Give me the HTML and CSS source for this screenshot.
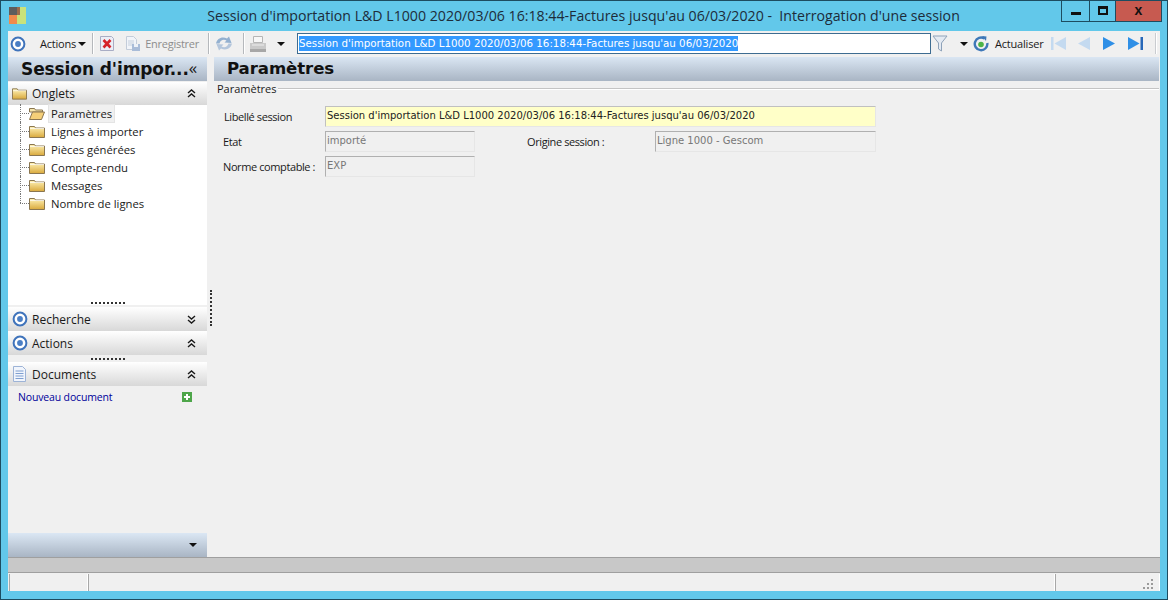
FILE: index.html
```html
<!DOCTYPE html>
<html lang="fr">
<head>
<meta charset="utf-8">
<title>Session d'importation</title>
<link rel="stylesheet" href="styles.css">
</head>
<body>
<svg class="defs" width="0" height="0">
  <defs>
    <linearGradient id="fold" x1="0" y1="0" x2="0" y2="1"><stop offset="0" stop-color="#fff3b8"/><stop offset="1" stop-color="#d9a93c"/></linearGradient>
    <symbol id="folder" viewBox="0 0 16 13"><path d="M.5 1.500h5l1 1.500h9v9.500H.5z" fill="url(#fold)" stroke="#8a7650"/><path d="M1 3.500h14" stroke="#fff" stroke-opacity=".7"/></symbol>
    <symbol id="target" viewBox="0 0 16 16"><circle cx="8" cy="8" r="6.400" fill="#fff" stroke="#3f73bb" stroke-width="2"/><circle cx="8" cy="8" r="2.900" fill="#4a7ec4"/></symbol>
    <symbol id="dup" viewBox="0 0 9 9"><path d="M1 4l3.500-3L8 4M1 8l3.500-3L8 8" fill="none" stroke="#1a1a1a" stroke-width="1.400"/></symbol>
    <symbol id="ddown" viewBox="0 0 9 9"><path d="M1 1l3.500 3L8 1M1 5l3.500 3L8 5" fill="none" stroke="#1a1a1a" stroke-width="1.400"/></symbol>
  </defs>
</svg>
<div class="window">
  <header class="titlebar">
    <svg class="appicon" width="17" height="17" viewBox="0 0 17 17"><rect width="8" height="8" fill="#5d5d5d"/><rect y="8" width="8" height="9" fill="#f08a4b"/><rect x="8" width="9" height="17" fill="#c9e27a"/><rect x="8" width="3" height="8" fill="#9a6b4c"/></svg>
    <div class="title">Session d'importation L&amp;D L1000 2020/03/06 16:18:44-Factures jusqu'au 06/03/2020 -&nbsp; Interrogation d'une session</div>
    <div class="winbtns">
      <div class="winbtn min"><span class="glyph-min"></span></div>
      <div class="winbtn max"><span class="glyph-max"></span></div>
      <div class="winbtn close">x</div>
    </div>
  </header>

  <div class="client">
    <div class="toolbar">
      <svg class="t-target" width="16" height="16"><use href="#target"/></svg>
      <span class="t-actions">Actions</span><span class="caret c-actions"></span>
      <span class="sep s1"></span>
      <svg class="t-del" width="14" height="15" viewBox="0 0 14 15"><path d="M.5.500h11l2 2v12H.5z" fill="#eceef6" stroke="#a9adc4"/><path d="M3.500 4l7 7.500M10.500 4l-7 7.500" stroke="#d6232a" stroke-width="2.600"/></svg>
      <svg class="t-save" width="16" height="17" viewBox="0 0 16 17"><path d="M1.500 1.500h7l3 3v10h-10z" fill="#f1f4f9" stroke="#c3ccd9"/><path d="M3 6h6M3 8h6M3 10h5" stroke="#c6d0dd"/><rect x="7" y="9" width="8" height="7" fill="#a9bcd8"/><rect x="9" y="9" width="4" height="3" fill="#eef2f8"/></svg>
      <span class="t-save-label">Enregistrer</span>
      <span class="sep s2"></span>
      <svg class="t-sync" width="16" height="17" viewBox="0 0 16 17"><path d="M0 8.500C1 3.500 6 1 11 3.500L13 1.500l2.500 6.500-7-.5 2-2C7.500 4 4.500 5 3.500 8.500z" fill="#93b0d0"/><path d="M16 8.500c-1 5-6 7.500-11 5L3 15.500.5 9l7 .5-2 2c3 1.500 6 .5 7-3z" fill="#b4c6dc"/></svg>
      <span class="sep s3"></span>
      <svg class="t-print" width="18" height="18" viewBox="0 0 18 18"><path d="M4.500 1.500h9v6h-9z" fill="#f7f7f7" stroke="#b5b5b5"/><path d="M1 8h16v6H1z" fill="#c9c9c9"/><path d="M1 14h16v3H1z" fill="#a7a7a7"/><path d="M3 10h12" stroke="#eee"/></svg>
      <span class="caret c-print"></span>
      <div class="search"><span class="sel">Session d'importation L&amp;D L1000 2020/03/06 16:18:44-Factures jusqu'au 06/03/2020</span></div>
      <svg class="t-filter" width="16" height="18" viewBox="0 0 16 18"><path d="M1 1h14l-5.500 7v8l-3-2V8z" fill="#e4eaf2" stroke="#8fa3ba"/></svg>
      <span class="caret c-filter"></span>
      <svg class="t-refresh" width="16" height="17" viewBox="0 0 16 17"><path d="M11.500 3.600A6.300 6.300 0 1 0 14.300 8" fill="none" stroke="#3f78b8" stroke-width="2.400"/><path d="M9 1l4.500.5L13 6z" fill="#3f78b8"/><circle cx="8" cy="9.500" r="2.800" fill="#4cb348"/></svg>
      <span class="t-refresh-label">Actualiser</span>
      <svg class="nav n1" width="15" height="15" viewBox="0 0 15 15"><rect x="0" y="1" width="2.500" height="13" fill="#c4daf0"/><path d="M15 1v13L3.500 7.500z" fill="#c4daf0"/></svg>
      <svg class="nav n2" width="12" height="15" viewBox="0 0 12 15"><path d="M12 1v13L0 7.500z" fill="#c4daf0"/></svg>
      <svg class="nav n3" width="12" height="15" viewBox="0 0 12 15"><path d="M0 1v13l12-6.500z" fill="#2f8fe6"/></svg>
      <svg class="nav n4" width="15" height="15" viewBox="0 0 15 15"><path d="M0 1v13l11.500-6.500z" fill="#2f8fe6"/><rect x="12.500" y="1" width="2.500" height="13" fill="#2868b8"/></svg>
      <span class="sep s4"></span>
    </div>

    <div class="body">
      <aside class="side">
        <div class="panel-head">
          <span class="panel-title">Session d'impor...</span>
          <span class="panel-collapse">«</span>
        </div>
        <div class="sec-head first">
          <svg class="sec-icon" width="15" height="13"><use href="#folder"/></svg>
          <span class="sec-label">Onglets</span>
          <svg class="chev" width="9" height="9"><use href="#dup"/></svg>
        </div>
        <ul class="tree">
          <li class="tree-item"><svg class="tree-icon" width="16" height="13" viewBox="0 0 16 13"><path d="M.5 1.500h5l1 1.500h7v2H.5z" fill="#f6e6ad" stroke="#8a7650"/><path d="M.5 12.500l3-7.500h12l-3 7.500z" fill="#f4cf78" stroke="#8a7650"/></svg><span class="tree-label active">Paramètres</span></li>
          <li class="tree-item"><svg class="tree-icon" width="16" height="13"><use href="#folder"/></svg><span class="tree-label">Lignes à importer</span></li>
          <li class="tree-item"><svg class="tree-icon" width="16" height="13"><use href="#folder"/></svg><span class="tree-label">Pièces générées</span></li>
          <li class="tree-item"><svg class="tree-icon" width="16" height="13"><use href="#folder"/></svg><span class="tree-label">Compte-rendu</span></li>
          <li class="tree-item"><svg class="tree-icon" width="16" height="13"><use href="#folder"/></svg><span class="tree-label">Messages</span></li>
          <li class="tree-item last"><svg class="tree-icon" width="16" height="13"><use href="#folder"/></svg><span class="tree-label">Nombre de lignes</span></li>
        </ul>
        <div class="grip"><span></span></div>
        <div class="sec-head">
          <svg class="sec-icon" width="16" height="16"><use href="#target"/></svg>
          <span class="sec-label">Recherche</span>
          <svg class="chev" width="9" height="9"><use href="#ddown"/></svg>
        </div>
        <div class="sec-head">
          <svg class="sec-icon" width="16" height="16"><use href="#target"/></svg>
          <span class="sec-label">Actions</span>
          <svg class="chev" width="9" height="9"><use href="#dup"/></svg>
        </div>
        <div class="grip small"><span></span></div>
        <div class="sec-head">
          <svg class="sec-icon doc" width="15" height="16" viewBox="0 0 15 16"><path d="M1.500.5h9l3 3v12h-12z" fill="#f1f5fc" stroke="#9db3d6"/><path d="M3.500 5h8M3.500 7.500h8M3.500 10h8M3.500 12.500h8" stroke="#7f9fd0"/></svg>
          <span class="sec-label">Documents</span>
          <svg class="chev" width="9" height="9"><use href="#dup"/></svg>
        </div>
        <div class="doc-row">
          <span class="doc-link">Nouveau document</span>
          <svg class="doc-add" width="10" height="10" viewBox="0 0 10 10"><rect width="10" height="10" fill="#4ea64a"/><path d="M5 2v6M2 5h6" stroke="#fff" stroke-width="2"/></svg>
        </div>
        <div class="side-foot"><span class="caret"></span></div>
      </aside>

      <div class="splitter"></div>

      <main class="main">
        <div class="main-head">Paramètres</div>
        <div class="legend"><span>Paramètres</span><i></i></div>
        <div class="form">
          <label class="lbl lbl-first">Libellé session</label>
          <div class="field required span3">Session d'importation L&amp;D L1000 2020/03/06 16:18:44-Factures jusqu'au 06/03/2020</div>
          <label class="lbl">Etat</label>
          <div class="field">importé</div>
          <span></span>
          <label class="lbl">Origine session :</label>
          <div class="field">Ligne 1000 - Gescom</div>
          <label class="lbl">Norme comptable :</label>
          <div class="field">EXP</div>
        </div>
      </main>
    </div>

    <div class="band"></div>
    <footer class="status">
      <div class="st st1"></div>
      <div class="st st2"></div>
      <div class="st st3"><svg class="resize" width="11" height="11" viewBox="0 0 11 11"><path d="M8 0h2v2H8zM4 4h2v2H4zM8 4h2v2H8zM0 8h2v2H0zM4 8h2v2H4zM8 8h2v2H8z" fill="#9a9a9a"/></svg></div>
    </footer>
  </div>
</div>
</body>
</html>
```
FILE: styles.css
```css
* { box-sizing: border-box; }
html, body { margin: 0; padding: 0; }
body { width: 1168px; height: 600px; overflow: hidden; font-family: "Open Sans", "Noto Sans", sans-serif; font-size: 12px; color: #1a1a1a; background: #62c8ea; }
.defs { position: absolute; }

.window { width: 1168px; height: 600px; border: 1px solid #1d4c60; background: #62c8ea; padding: 0 7px 8px; display: flex; flex-direction: column; }

.titlebar { height: 30px; flex: none; display: grid; grid-template-columns: 1fr auto 1fr; align-items: start; margin: 0 -7px; padding: 0 5px 0 8px; }
.appicon { margin-top: 6px; }
.title { font-size: 14.17px; line-height: 20px; margin: 5px 4px 0 0; white-space: nowrap; color: #1d2c3a; }
.winbtns { justify-self: end; display: flex; height: 21px; border: 1px solid #1d4c60; border-top: 0; }
.winbtn { display: flex; align-items: center; justify-content: center; height: 100%; }
.min { width: 28px; border-right: 1px solid #1d4c60; }
.max { width: 26px; border-right: 1px solid #1d4c60; }
.close { width: 45px; background: #c75a50; font-family: "Liberation Sans", sans-serif; font-weight: 700; font-size: 14px; color: #111; padding-bottom: 3px; }
.glyph-min { width: 10px; height: 3px; background: #111; margin-top: 5px; }
.glyph-max { width: 10px; height: 9px; border: 2px solid #111; border-top-width: 3px; margin-top: -2px; }

.client { height: 560px; flex: none; display: flex; flex-direction: column; background: #f0f0f0; }

.toolbar { height: 25px; flex: none; display: flex; align-items: center; background: #f0f0f0; font-size: 11px; letter-spacing: -.2px; }
.t-target { margin-left: 2px; }
.t-actions { margin-left: 14px; }
.caret { display: inline-block; width: 0; height: 0; border: 4px solid transparent; border-top-color: #111; border-bottom: 0; }
.c-actions { margin-left: 2px; }
.sep { width: 1px; height: 21px; background: #b5b8bc; border-right: 1px solid #fff; box-sizing: content-box; }
.s1 { margin-left: 6px; }
.t-del { margin-left: 6px; }
.t-save { margin-left: 11px; }
.t-save-label { margin-left: 4px; color: #8d8d8d; letter-spacing: -.25px; }
.s2 { margin-left: 9px; }
.t-sync { margin-left: 6px; }
.s3 { margin-left: 11px; }
.t-print { margin-left: 4px; }
.c-print { margin-left: 10px; }
.search { width: 634px; height: 21px; margin-left: 12px; border: 1px solid #3d6c91; background: #fff; padding: 2px 1px; font-family: "DejaVu Sans", sans-serif; font-size: 10.27px; line-height: 15px; letter-spacing: 0; white-space: nowrap; overflow: hidden; }
.sel { background: #3399ff; color: #fff; display: inline-block; }
.t-filter { margin-left: 1px; }
.c-filter { margin-left: 12px; }
.t-refresh { margin-left: 5px; }
.t-refresh-label { margin-left: 6px; }
.nav { flex: none; }
.n1 { margin-left: 7px; }
.n2 { margin-left: 12px; }
.n3 { margin-left: 13px; }
.n4 { margin-left: 13px; }
.s4 { margin-left: 12px; background: #c9ccd0; }

.body { flex: 1; min-height: 0; display: flex; }
.side { width: 199px; flex: none; display: flex; flex-direction: column; margin-top: 1px; }
.panel-head, .main-head { height: 24px; flex: none; background: linear-gradient(#dae6f3, #a9b5c4); }
.panel-head { display: flex; align-items: center; justify-content: space-between; padding: 0 10px 0 13px; margin-bottom: 1px; }
.panel-title, .main-head { font-family: "DejaVu Sans", sans-serif; font-weight: 700; font-size: 16.6px; line-height: 24px; color: #111; white-space: nowrap; letter-spacing: -.1px; }
.panel-title { font-size: 17px; }
.panel-collapse { font-size: 17px; line-height: 20px; margin-top: -2px; }

.sec-head { height: 24px; flex: none; display: flex; align-items: center; padding: 0 11px 0 4px; background: linear-gradient(#ffffff, #d8d8d8); font-size: 12px; }
.sec-head.first { height: 23px; }
.sec-icon { flex: none; }
.sec-label { margin-left: 4px; flex: 1; }
.sec-head.first .sec-label { margin-left: 5px; }
.sec-icon.doc + .sec-label { margin-left: 5px; }
.chev { flex: none; }

.tree { list-style: none; margin: 0; padding: 0 0 0 12px; height: 197px; flex: none; background: #fff; }
.tree-item { height: 18px; display: flex; align-items: center; position: relative; padding-left: 9px; top: -1px; font-size: 11.3px; }
.tree-item::before { content: ""; position: absolute; left: 0; top: 0; bottom: 0; border-left: 1px dotted #777; }
.tree-item::after { content: ""; position: absolute; left: 0; top: 9px; width: 9px; border-top: 1px dotted #777; }
.tree-item.last::before { bottom: 9px; }
.tree-icon { flex: none; position: relative; z-index: 1; }
.tree-label { margin-left: 4px; padding: 0 2px; line-height: 17px; }
.tree-label.active { background: #f0f0f0; border: 1px solid #e4e4e4; margin-left: 3px; }

.grip { height: 5px; flex: none; display: flex; justify-content: center; background: #f0f0f0; align-items: center; }
.grip span { width: 34px; height: 0; border-top: 2px dotted #333; }
.tree + .grip { background: linear-gradient(#fff 3px, #f0f0f0 3px); align-items: flex-start; }
.grip.small { height: 7px; }

.doc-row { display: flex; align-items: center; justify-content: space-between; height: 21px; padding: 0 15px 0 10px; flex: none; }
.doc-link { color: #00009a; font-size: 10.5px; letter-spacing: -.15px; }
.side-foot { margin-top: auto; height: 24px; flex: none; background: linear-gradient(#dbe7f4, #a9b5c4); display: flex; align-items: center; justify-content: flex-end; padding: 0 10px 0 0; }
.side-foot .caret { border-width: 4px; border-bottom: 0; }

.splitter { width: 7px; flex: none; position: relative; }
.splitter::after { content: ""; position: absolute; left: 3px; top: 234px; height: 36px; border-left: 2px dotted #333; }

.main { flex: 1; min-width: 0; margin-top: 1px; padding-right: 1px; }
.main-head { padding-left: 13px; }
.legend { display: flex; align-items: center; height: 14px; margin: 1px 0 0 3px; }
.legend span { line-height: 14px; padding-right: 1px; font-size: 11px; }
.legend i { flex: 1; height: 1px; background: #c4c4c4; border-bottom: 1px solid #fff; box-sizing: content-box; }

.form { display: grid; grid-template-columns: 102px 150px 52px 128px 221px; grid-auto-rows: 21px; row-gap: 4px; padding: 10px 0 0 9px; font-size: 12px; }
.lbl { line-height: 22px; letter-spacing: -.4px; font-size: 11px; }
.lbl-first { padding-left: 1px; }
.field { border: 1px solid #b0b0b0; border-right-color: #e6e6e6; border-bottom-color: #e6e6e6; padding: 0 1px; font-family: "DejaVu Sans", sans-serif; font-size: 10px; line-height: 18px; color: #777; background: #f0f0f0; white-space: nowrap; overflow: hidden; }
.required { background: #ffffc8; color: #222; line-height: 17px; border-left-color: #c0c0c0; border-top-color: #c0c0c0; }
.span3 { grid-column: 2 / span 4; }

.band { height: 16px; flex: none; background: #c8c8c8; border-top: 1px solid #9f9f9f; border-bottom: 1px solid #9f9f9f; }
.status { height: 18px; flex: none; display: flex; background: #f0f0f0; padding: 1px 0 0 1px; }
.st { border-left: 1px solid #a8a8a8; border-right: 1px solid #fff; position: relative; }
.st1 { width: 79px; }
.st2 { flex: 1; }
.st3 { width: 105px; }
.resize { position: absolute; right: 5px; bottom: 1px; }
```
